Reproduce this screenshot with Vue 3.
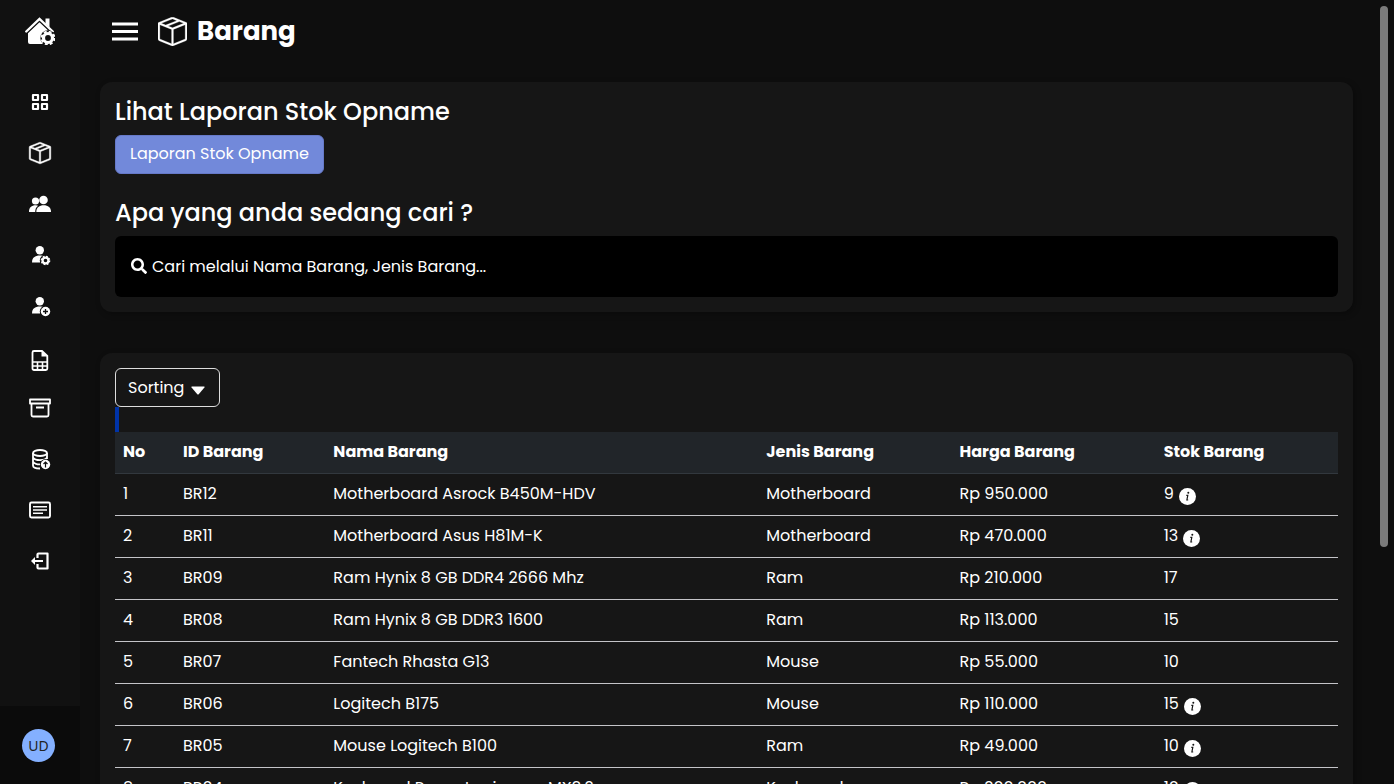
<script setup>
import { ref } from 'vue'

const query = ref('')

const rows = [
  { id: 'BR12', name: 'Motherboard Asrock B450M-HDV', type: 'Motherboard', price: 'Rp 950.000', stock: 9, info: true },
  { id: 'BR11', name: 'Motherboard Asus H81M-K', type: 'Motherboard', price: 'Rp 470.000', stock: 13, info: true },
  { id: 'BR09', name: 'Ram Hynix 8 GB DDR4 2666 Mhz', type: 'Ram', price: 'Rp 210.000', stock: 17, info: false },
  { id: 'BR08', name: 'Ram Hynix 8 GB DDR3 1600', type: 'Ram', price: 'Rp 113.000', stock: 15, info: false },
  { id: 'BR07', name: 'Fantech Rhasta G13', type: 'Mouse', price: 'Rp 55.000', stock: 10, info: false },
  { id: 'BR06', name: 'Logitech B175', type: 'Mouse', price: 'Rp 110.000', stock: 15, info: true },
  { id: 'BR05', name: 'Mouse Logitech B100', type: 'Ram', price: 'Rp 49.000', stock: 10, info: true },
  { id: 'BR04', name: 'Keyboard Rexus Legionare MX3.2', type: 'Keyboard', price: 'Rp 200.000', stock: 10, info: true }
]

const boxPath =
  'M8.186 1.113a.5.5 0 0 0-.372 0L1.846 3.5l2.404.961L10.404 2l-2.218-.887zm3.564 1.426L5.596 5 8 5.961 14.154 3.5l-2.404-.961zm3.25 1.7-6.5 2.6v7.922l6.5-2.6V4.24zM7.5 14.762V6.838L1 4.239v7.923l6.5 2.6zM7.443.184a1.5 1.5 0 0 1 1.114 0l7.129 2.852A.5.5 0 0 1 16 3.5v8.662a1 1 0 0 1-.629.928l-7.185 2.874a.5.5 0 0 1-.372 0L.63 13.09a1 1 0 0 1-.63-.928V3.5a.5.5 0 0 1 .314-.464L7.443.184z'
</script>

<template>
  <div class="app">
    <aside class="sidebar">
      <a href="#" class="logo" aria-label="Home">
        <svg width="30" height="28" viewBox="0 0 30 28">
          <path d="M14.500 4.500 3 15.500V25a2 2 0 0 0 2 2H18V15.500h8.500z" fill="#fff" />
          <path d="M1.300 14.700 14.500 2 27.700 14.700" fill="none" stroke="#111" stroke-width="4.600" />
          <path d="M1.300 14.500 14.500 1.800 27.700 14.500" fill="none" stroke="#fff" stroke-width="2.400" stroke-linecap="round" />
          <path d="M20.500 1.500h4v9l-4-4z" fill="#fff" />
          <path d="M14.500 6.500 5 15.600V18h17v-4.400z" fill="#fff" />
          <circle cx="23" cy="21" r="7.700" fill="#111" />
          <circle cx="23" cy="21" r="4.500" fill="none" stroke="#fff" stroke-width="3.200" />
          <circle cx="23" cy="21" r="6.400" fill="none" stroke="#fff" stroke-width="2" stroke-dasharray="2.900 2.127" />
        </svg>
      </a>
      <nav>
        <a href="#" aria-label="Dashboard">
          <svg viewBox="0 0 24 24"><path d="M5 5h5v5H5zM14 5h5v5h-5zM5 14h5v5H5zM14 14h5v5h-5z" fill="none" stroke="#fff" stroke-width="2.200" stroke-linejoin="round" /></svg>
        </a>
        <a href="#" aria-label="Barang">
          <svg viewBox="-0.900 -0.900 17.800 17.800"><path :d="boxPath" fill="#fff" stroke="#fff" stroke-width="0.350" /></svg>
        </a>
        <a href="#" aria-label="Users">
          <svg viewBox="0 0 24 24" fill="#fff">
            <circle cx="7.500" cy="9" r="3.600" />
            <path d="M1 20c0-4.500 2.500-6.700 6.800-6.700 1 0 1.700.2 2.300.5C8 15.200 7.300 17 7.200 20z" />
            <circle cx="15.500" cy="8" r="4.300" />
            <path d="M8.300 20c0-4.500 3-6.700 7.400-6.700S23 15.500 23 20z" />
          </svg>
        </a>
        <a href="#" aria-label="User settings">
          <svg viewBox="0 0 24 24">
            <circle cx="11.800" cy="7.200" r="4.200" fill="#fff" />
            <path d="M4 19.500c0-5 3-7 7.800-7 2 0 3.500.3 4.800 1L12 19.500z" fill="#fff" />
            <circle cx="17.500" cy="17.500" r="5.700" fill="#111" />
            <circle cx="17.500" cy="17.500" r="2.900" fill="none" stroke="#fff" stroke-width="2.200" />
            <circle cx="17.500" cy="17.500" r="4.200" fill="none" stroke="#fff" stroke-width="1.300" stroke-dasharray="1.800 1.499" />
          </svg>
        </a>
        <a href="#" aria-label="Add user">
          <svg viewBox="0 0 24 24">
            <circle cx="11.800" cy="7.200" r="4.200" fill="#fff" />
            <path d="M4 19.500c0-5 3-7 7.800-7 2 0 3.500.3 4.800 1L12 19.500z" fill="#fff" />
            <circle cx="17.500" cy="17.500" r="5.700" fill="#111" />
            <circle cx="17.500" cy="17.500" r="4.700" fill="#fff" />
            <path d="M17.500 15v5M15 17.500h5" stroke="#111" stroke-width="1.300" />
          </svg>
        </a>
        <a href="#" aria-label="Spreadsheet">
          <svg viewBox="0 -4 24 24">
            <path d="M6 2h8l5.300 5v12.500a1.500 1.500 0 0 1-1.500 1.500H6a1.500 1.500 0 0 1-1.500-1.500v-16A1.500 1.500 0 0 1 6 2z" fill="none" stroke="#fff" stroke-width="1.800" />
            <path d="M13.500 2v5.500H19z" fill="#fff" />
            <path d="M5 13h14M5 17h14M9.500 13v8M14.500 13v8" stroke="#fff" stroke-width="1.600" />
          </svg>
        </a>
        <a href="#" aria-label="Archive">
          <svg viewBox="0 0 24 24" fill="none" stroke="#fff" stroke-width="1.800" stroke-linejoin="round">
            <path d="M2 3.500h20v4H2zM3.500 7.500v11.500a1.500 1.500 0 0 0 1.500 1.500h14a1.500 1.500 0 0 0 1.500-1.500V7.500M8 11.500h8" />
          </svg>
        </a>
        <a href="#" aria-label="Backup database">
          <svg viewBox="0 0 24 24">
            <g fill="none" stroke="#fff" stroke-width="1.800">
              <ellipse cx="12" cy="6" rx="7" ry="3" />
              <path d="M5 6v12.500c0 1.700 3 3 7 3M19 6v6M5 10.500c1 1.700 4 2.700 7 2.700s6-.6 7-2.700M5 14.700c1 1.600 4 2.700 7 2.700" />
            </g>
            <circle cx="17.500" cy="17.500" r="5.500" fill="#111" />
            <circle cx="17.500" cy="17.500" r="4.700" fill="#fff" />
            <path d="M17.500 20.500v-5M15.500 17l2-2 2 2" fill="none" stroke="#111" stroke-width="1.200" />
          </svg>
        </a>
        <a href="#" aria-label="News">
          <svg viewBox="0 0 24 24" fill="none" stroke="#fff" stroke-width="1.900">
            <rect x="2" y="4.500" width="20" height="15" rx="1.500" />
            <path d="M5 8.700h14M5 12h14M5 15.300h10" stroke-width="1.600" />
          </svg>
        </a>
        <a href="#" aria-label="Log out">
          <svg viewBox="0 0 24 24">
            <path d="M9.500 9V5.500a1 1 0 0 1 1-1H19.500v15h-9a1 1 0 0 1-1-1V15" fill="none" stroke="#fff" stroke-width="2.200" stroke-linejoin="round" />
            <path d="M7 11h8v2H7v3l-4-4 4-4z" fill="#fff" />
          </svg>
        </a>
      </nav>
      <div class="account"><span class="avatar">UD</span></div>
    </aside>

    <main>
      <header>
        <button type="button" class="menu" aria-label="Menu">
          <svg width="26" height="20" viewBox="0 0 26 20"><path d="M0 3h26M0 10.500h26M0 18h26" stroke="#fff" stroke-width="3" /></svg>
        </button>
        <h1>
          <svg width="29" height="29" viewBox="0 0 16 16"><path :d="boxPath" fill="#fff" stroke="#fff" stroke-width="0.150" /></svg>
          Barang
        </h1>
      </header>

      <section class="card">
        <h2>Lihat Laporan Stok Opname</h2>
        <button type="button" class="report">Laporan Stok Opname</button>
        <h2><label for="search">Apa yang anda sedang cari ?</label></h2>
        <div class="search">
          <svg width="16" height="16" viewBox="0 0 512 512"><path fill="#fff" d="M505 442.700L405.300 343c-4.500-4.500-10.600-7-17-7H372c27.600-35.300 44-79.700 44-128C416 93.100 322.900 0 208 0S0 93.100 0 208s93.100 208 208 208c48.300 0 92.700-16.400 128-44v16.300c0 6.400 2.500 12.500 7 17l99.700 99.700c9.400 9.400 24.600 9.400 33.900 0l28.300-28.300c9.400-9.400 9.400-24.600.1-34zM208 336c-70.700 0-128-57.200-128-128 0-70.700 57.200-128 128-128 70.700 0 128 57.200 128 128 0 70.700-57.200 128-128 128z" /></svg>
          <input id="search" v-model="query" type="text" placeholder="Cari melalui Nama Barang, Jenis Barang..." />
        </div>
      </section>

      <section class="card">
        <button type="button" class="sorting">
          Sorting
          <svg width="14" height="9" viewBox="0 0 14 9"><path d="M1 .5h12q1 .2.400 1L7.700 8.200q-.7.700-1.400 0L.6 1.500Q0 .7 1 .5z" fill="#fff" /></svg>
        </button>
        <div class="marker"></div>
        <table>
          <colgroup>
            <col class="c-no" /><col class="c-id" /><col class="c-name" /><col class="c-type" /><col class="c-price" /><col class="c-stock" />
          </colgroup>
          <thead>
            <tr>
              <th>No</th>
              <th>ID Barang</th>
              <th>Nama Barang</th>
              <th>Jenis Barang</th>
              <th>Harga Barang</th>
              <th>Stok Barang</th>
            </tr>
          </thead>
          <tbody>
            <tr v-for="(row, i) in rows" :key="row.id">
              <td>{{ i + 1 }}</td>
              <td>{{ row.id }}</td>
              <td>{{ row.name }}</td>
              <td>{{ row.type }}</td>
              <td>{{ row.price }}</td>
              <td>
                <span class="stock">
                  {{ row.stock }}
                  <svg v-if="row.info" width="17" height="17" viewBox="0 0 17 17">
                    <circle cx="8.500" cy="8.500" r="8.500" fill="#fff" />
                    <circle cx="9.300" cy="4.700" r="1" fill="#161616" />
                    <path d="M7.300 7.300h1.500L7.900 12h1.300" fill="none" stroke="#161616" stroke-width="1.200" />
                  </svg>
                </span>
              </td>
            </tr>
          </tbody>
        </table>
      </section>
    </main>
    <div class="scroll-thumb"></div>
  </div>
</template>

<style>
body {
  margin: 0;
  background: #0e0e0e;
}
</style>

<style scoped>
.app {
  display: flex;
  height: 100vh;
  overflow: hidden;
  background: #0e0e0e;
  color: #fff;
  font-family: Poppins, Inter, "Open Sans", sans-serif;
  font-size: 16px;
}
svg {
  display: block;
  flex: none;
}
button,
input {
  font: inherit;
  color: inherit;
}
.sidebar {
  flex: none;
  width: 80px;
  display: flex;
  flex-direction: column;
  background: #111;
}
.logo {
  height: 76px;
  box-sizing: border-box;
  padding-top: 17px;
  display: flex;
  justify-content: center;
}
nav a {
  height: 51px;
  display: flex;
  align-items: center;
  justify-content: center;
}
nav svg {
  width: 24px;
  height: 24px;
  overflow: visible;
}
.account {
  margin-top: auto;
  height: 78px;
  display: flex;
  align-items: center;
  justify-content: center;
  background: #0b0b0b;
}
.avatar {
  width: 33px;
  height: 33px;
  margin-right: 3px;
  border-radius: 50%;
  background: #84b0ff;
  color: #222;
  font-family: "Noto Sans", sans-serif;
  font-size: 14px;
  line-height: 33px;
  text-align: center;
}
main {
  flex: 1;
  min-width: 0;
  padding: 0 41px 0 20px;
}
header {
  height: 62px;
  margin-bottom: 20px;
  padding-left: 12px;
  display: flex;
  align-items: center;
  gap: 20px;
}
.menu {
  border: 0;
  padding: 0;
  background: none;
}
h1 {
  margin: 0;
  display: flex;
  align-items: center;
  gap: 10px;
  font-size: 26px;
  line-height: 36px;
  font-weight: 700;
}
.card {
  padding: 15px;
  border-radius: 12px;
  background: #161616;
  box-shadow: 2px 2px 6px rgba(0, 0, 0, 0.3);
}
.card + .card {
  margin-top: 41px;
}
h2 {
  margin: 0 0 8px;
  font-size: 24px;
  line-height: 30px;
  font-weight: 500;
}
.report {
  display: block;
  height: 39px;
  margin-bottom: 24px;
  padding: 0 14px 2px;
  border: 1px solid #6679c8;
  border-radius: 6px;
  background: #7289da;
}
.search {
  height: 61px;
  padding: 0 16px;
  display: flex;
  align-items: center;
  gap: 5px;
  border-radius: 6px;
  background: #000;
}
.search svg {
  margin-bottom: 2px;
}
.search input {
  flex: 1;
  min-width: 0;
  border: 0;
  padding: 0;
  outline: 0;
  background: none;
}
.search input::placeholder {
  color: #fff;
  opacity: 1;
}
.sorting {
  height: 39px;
  padding: 0 14px 0 12px;
  display: flex;
  align-items: center;
  gap: 7px;
  border: 1px solid #ddd;
  border-radius: 6px;
  background: none;
}
.sorting svg {
  margin-top: 5px;
}
.marker {
  width: 4px;
  height: 25px;
  background: #0033a8;
}
table {
  width: 100%;
  table-layout: fixed;
  border-collapse: separate;
  border-spacing: 0;
}
.c-no { width: 4.9%; }
.c-id { width: 12.3%; }
.c-name { width: 35.4%; }
.c-type { width: 15.8%; }
.c-price { width: 16.7%; }
.c-stock { width: 14.9%; }
th,
td {
  box-sizing: border-box;
  height: 42px;
  padding: 0 8px 2px;
  text-align: left;
  white-space: nowrap;
  border-bottom: 1px solid #c4c4c8;
}
th {
  font-weight: 700;
  background: #212529;
  border-bottom-color: #32383e;
}
.stock {
  display: flex;
  align-items: center;
  gap: 5px;
}
.stock svg {
  margin-top: 5px;
}
.scroll-thumb {
  position: fixed;
  top: 6px;
  right: 6px;
  width: 8px;
  height: 69vh;
  border-radius: 4px;
  background: #7b7b7b;
}
</style>
